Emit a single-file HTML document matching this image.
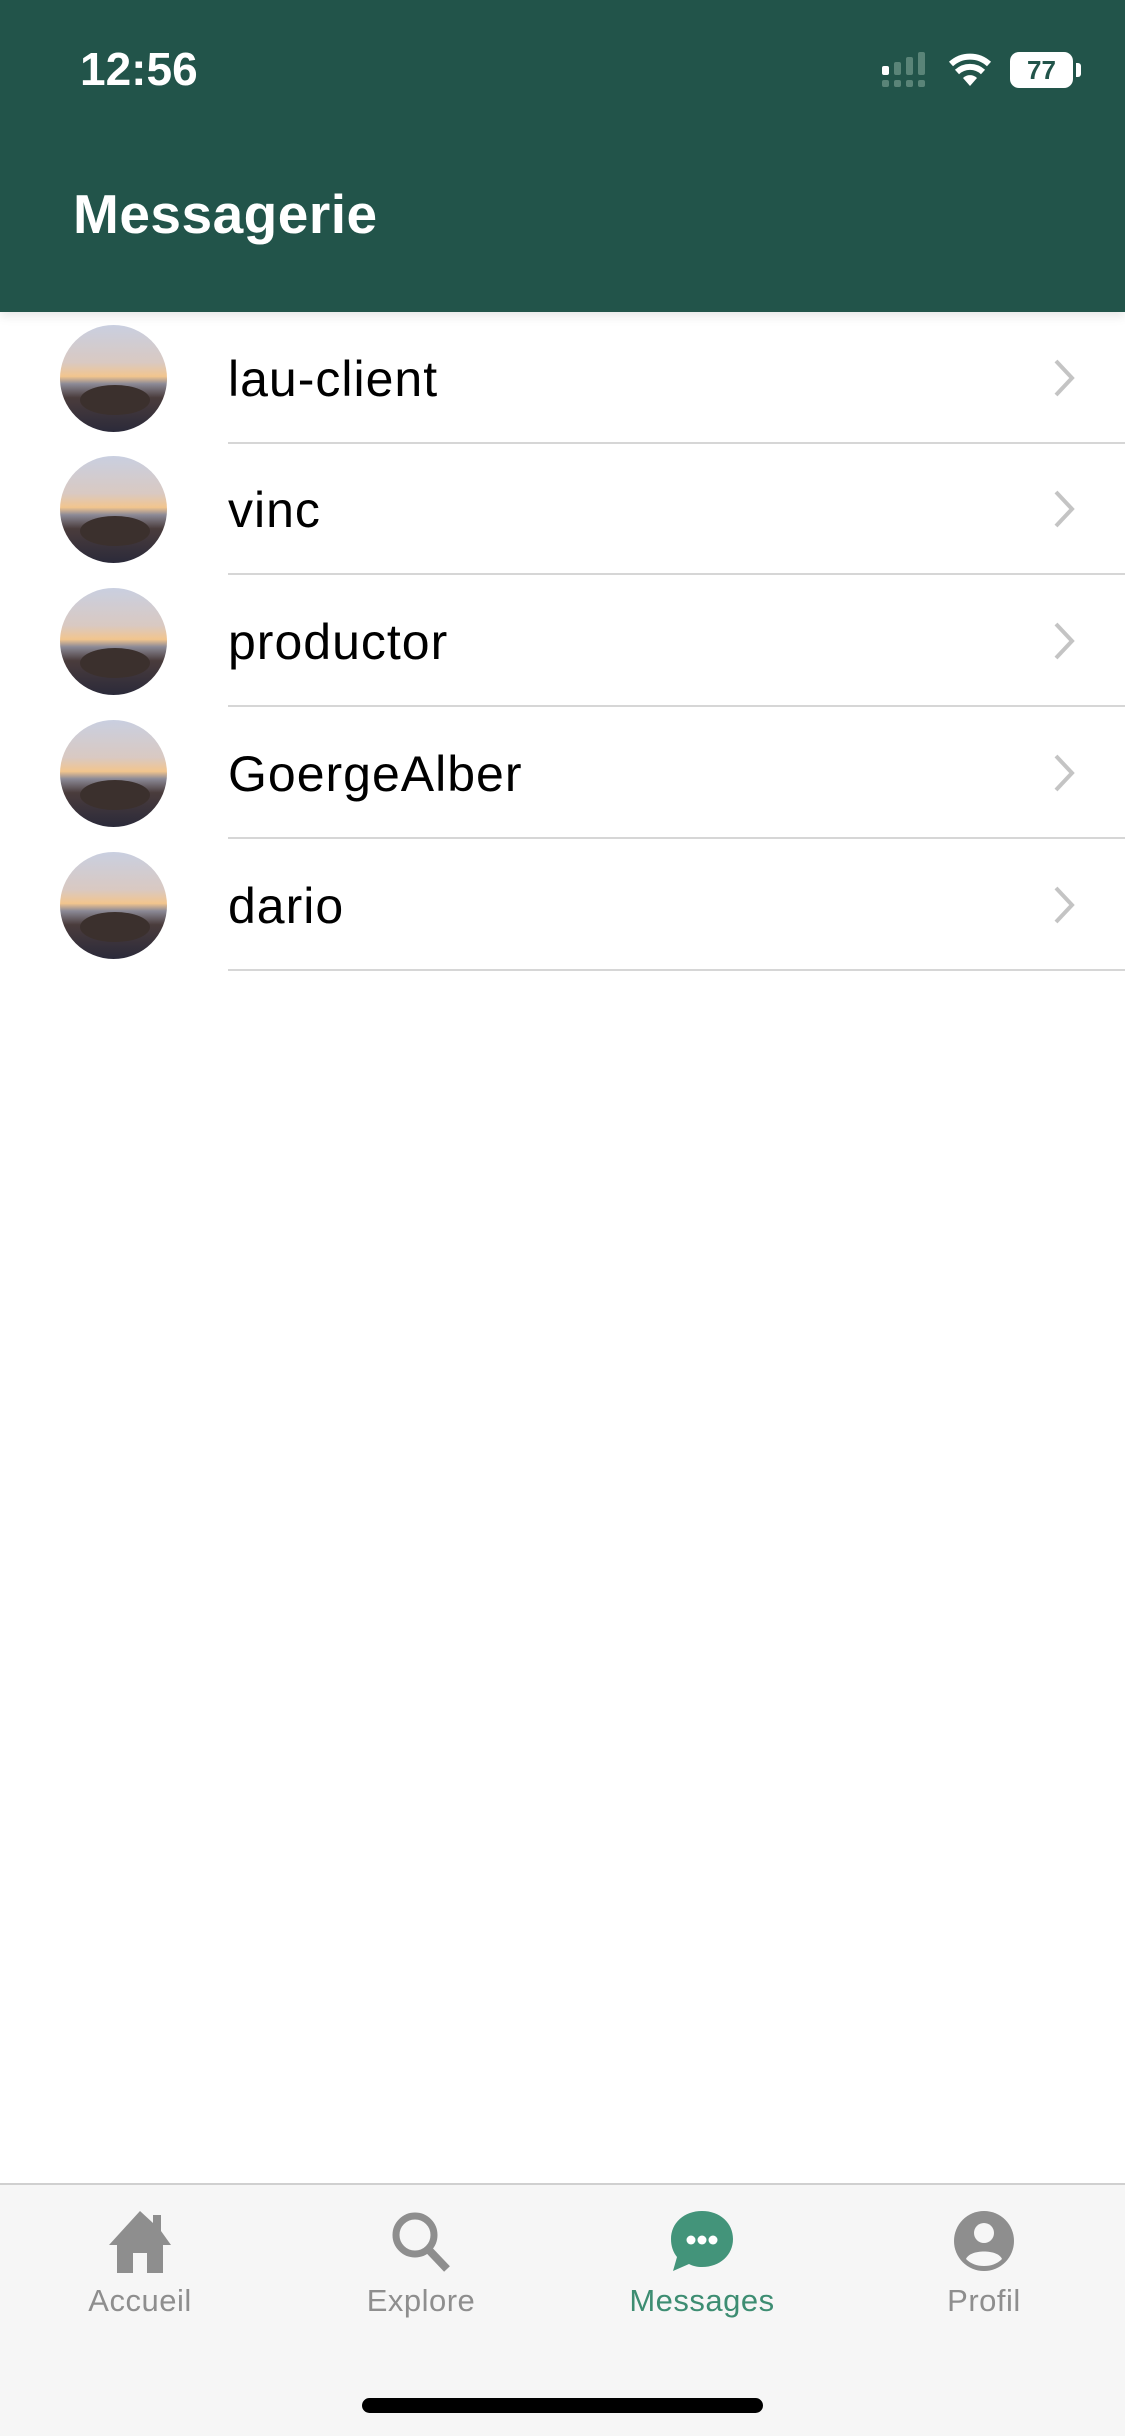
<!DOCTYPE html>
<html><head><meta charset="utf-8"><style>
*{margin:0;padding:0;box-sizing:border-box}
body{width:1125px;height:2436px;position:relative;background:#fff;font-family:"Liberation Sans",sans-serif;overflow:hidden}
.hdr{position:absolute;left:0;top:0;width:1125px;height:312px;background:#22544a;box-shadow:0 4px 10px rgba(0,0,0,.1)}
.time{position:absolute;left:80px;top:42px;color:#fff;font-size:46px;font-weight:600}
.title{position:absolute;left:73px;top:182px;color:#fff;font-size:55px;font-weight:600;letter-spacing:0.5px}
.row{position:absolute;left:0;width:1125px;height:132px}
.av{position:absolute;left:60px;top:13px;width:107px;height:107px;border-radius:50%;background:linear-gradient(180deg,#c9cfe0 0%,#d9c9c2 35%,#f2c58e 48%,#8c8a96 55%,#4a3c3c 68%,#2b2a3a 100%);overflow:hidden}
.av:after{content:"";position:absolute;left:20px;top:60px;width:70px;height:30px;border-radius:50%;background:#3b302d}
.nm{position:absolute;left:228px;top:38px;font-size:50px;color:#000;letter-spacing:1px}
.sep{position:absolute;left:228px;right:0;bottom:0;height:2px;background:#d6d6d6}
.chev{position:absolute;left:1052px;top:46px}
.tab{position:absolute;left:0;top:2183px;width:1125px;height:253px;background:#f6f6f6;border-top:2px solid #d0d0d0}
.ti{position:absolute;top:24px;width:200px;text-align:center}
.ti svg{display:block;margin:0 auto}
.ti span{display:block;font-size:31px;color:#8e8e8e;margin-top:10px;letter-spacing:0.5px}
.hb{position:absolute;left:362px;top:2398px;width:401px;height:15px;border-radius:8px;background:#000}
</style></head><body>
<div class="hdr">
<div class="time">12:56</div>
<svg style="position:absolute;left:882px;top:52px" width="52" height="36"><g fill="#fff"><rect x="0" y="14" width="7" height="9" rx="2"/></g><g fill="#5a8478"><rect x="12" y="10" width="7" height="13" rx="2"/><rect x="24" y="5" width="7" height="18" rx="2"/><rect x="36" y="0" width="7" height="23" rx="2"/><rect x="0" y="28" width="7" height="7" rx="2"/><rect x="12" y="28" width="7" height="7" rx="2"/><rect x="24" y="28" width="7" height="7" rx="2"/><rect x="36" y="28" width="7" height="7" rx="2"/></g></svg>
<svg style="position:absolute;left:948px;top:52px" width="44" height="34" viewBox="0 0 44 34"><path d="M22 34 L15 26 A10 10 0 0 1 29 26 Z" fill="#fff"/><path d="M9 20 A19 19 0 0 1 35 20" stroke="#fff" stroke-width="6" fill="none"/><path d="M3 12 A28 28 0 0 1 41 12" stroke="#fff" stroke-width="6" fill="none"/></svg>
<div style="position:absolute;left:1010px;top:52px;width:63px;height:36px;background:#fff;border-radius:9px;color:#22544a;font-size:26px;font-weight:700;text-align:center;line-height:36px">77</div>
<div style="position:absolute;left:1076px;top:63px;width:5px;height:14px;background:#fff;border-radius:0 3px 3px 0"></div>
<div class="title">Messagerie</div>
</div>

<div class="row" style="top:312px"><div class="av"></div><div class="nm">lau-client</div><svg class="chev" width="24" height="40"><path d="M4 3 L20 20 L4 37" stroke="#c4c4c4" stroke-width="4" fill="none"/></svg><div class="sep"></div></div>
<div class="row" style="top:443px"><div class="av"></div><div class="nm">vinc</div><svg class="chev" width="24" height="40"><path d="M4 3 L20 20 L4 37" stroke="#c4c4c4" stroke-width="4" fill="none"/></svg><div class="sep"></div></div>
<div class="row" style="top:575px"><div class="av"></div><div class="nm">productor</div><svg class="chev" width="24" height="40"><path d="M4 3 L20 20 L4 37" stroke="#c4c4c4" stroke-width="4" fill="none"/></svg><div class="sep"></div></div>
<div class="row" style="top:707px"><div class="av"></div><div class="nm">GoergeAlber</div><svg class="chev" width="24" height="40"><path d="M4 3 L20 20 L4 37" stroke="#c4c4c4" stroke-width="4" fill="none"/></svg><div class="sep"></div></div>
<div class="row" style="top:839px"><div class="av"></div><div class="nm">dario</div><svg class="chev" width="24" height="40"><path d="M4 3 L20 20 L4 37" stroke="#c4c4c4" stroke-width="4" fill="none"/></svg><div class="sep"></div></div>

<div class="tab">
<div class="ti" style="left:40px"><svg width="74" height="64" viewBox="0 0 74 64"><path d="M37 2 L6 36 L14 36 L14 64 L30 64 L30 44 L44 44 L44 64 L60 64 L60 36 L68 36 L58 22 L58 6 L50 6 L50 14 Z" fill="#8e8e8e"/></svg><span>Accueil</span></div>
<div class="ti" style="left:321px"><svg width="64" height="64" viewBox="0 0 64 64"><circle cx="26" cy="26" r="19" stroke="#8e8e8e" stroke-width="7" fill="none"/><path d="M39 40 L58 60" stroke="#8e8e8e" stroke-width="8"/></svg><span>Explore</span></div>
<div class="ti" style="left:602px"><svg width="66" height="64" viewBox="0 0 66 64"><path d="M33 2 C51 2 64 14 64 30 C64 46 51 58 33 58 C28 58 24 57 20 55 L4 62 L8 48 C4 43 2 37 2 30 C2 14 15 2 33 2 Z" fill="#43947a"/><circle cx="22" cy="31" r="4.5" fill="#fff"/><circle cx="33" cy="31" r="4.5" fill="#fff"/><circle cx="44" cy="31" r="4.5" fill="#fff"/></svg><span style="color:#3d8d72">Messages</span></div>
<div class="ti" style="left:884px"><svg width="64" height="64" viewBox="0 0 64 64"><circle cx="32" cy="32" r="30" fill="#8e8e8e"/><circle cx="32" cy="24" r="10" fill="#f6f6f6"/><path d="M14 50 C18 40 46 40 50 50 C45 55 39 57 32 57 C25 57 19 55 14 50 Z" fill="#f6f6f6"/></svg><span>Profil</span></div>
</div>
<div class="hb"></div>
</body></html>
